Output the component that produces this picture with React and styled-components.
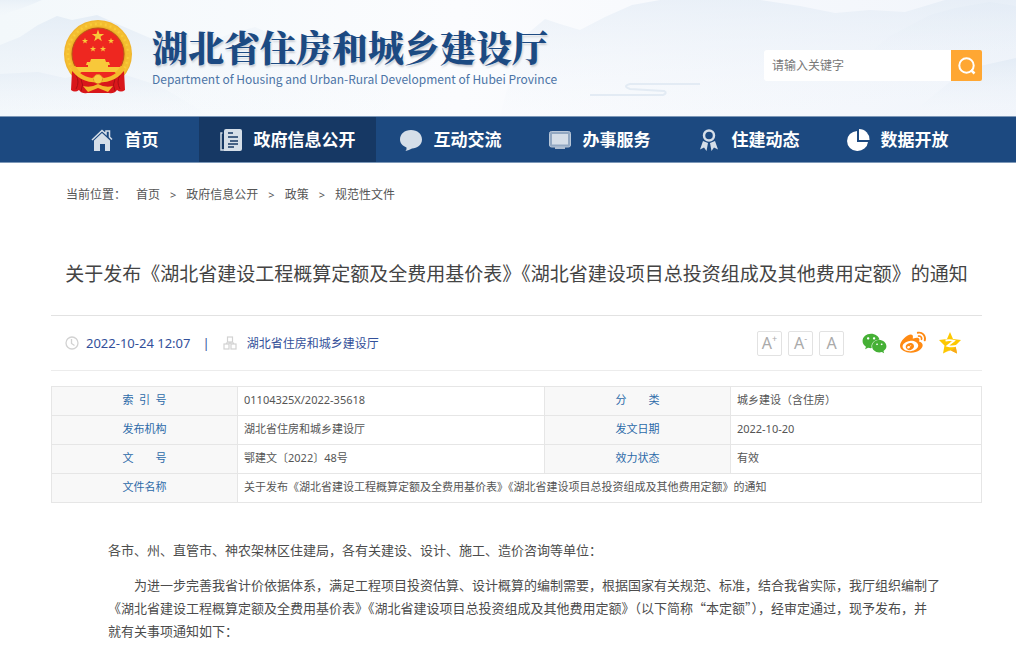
import React, { useState } from "react";
import styled, { createGlobalStyle } from "styled-components";
import { FaWeixin, FaWeibo } from "react-icons/fa";

const GlobalStyle = createGlobalStyle`
  * {
    box-sizing: border-box;
  }
  body {
    margin: 0;
    background: #fff;
    color: #555;
    font-family: "Noto Sans", "Noto Sans CJK SC", sans-serif;
    font-size: 13px;
  }
  a {
    color: inherit;
    text-decoration: none;
  }
`;

const STAR = "0,-10 2.3,-3.2 9.5,-3.1 3.8,1.2 5.9,8.1 0,4 -5.9,8.1 -3.8,1.2 -9.5,-3.1 -2.3,-3.2";

const Emblem = () => (
  <svg width="70" height="74" viewBox="0 0 70 74" role="img" aria-label="国徽">
    <defs>
      <radialGradient id="gold" cx="50%" cy="50%" r="50%">
        <stop offset="76%" stopColor="#e9a51f" />
        <stop offset="88%" stopColor="#fbcf3a" />
        <stop offset="100%" stopColor="#eeb02a" />
      </radialGradient>
    </defs>
    <circle cx="35" cy="34" r="34" fill="url(#gold)" />
    <circle cx="35" cy="34" r="30" fill="none" stroke="#f3bd30" strokeWidth="3" strokeDasharray="3 2" />
    <circle cx="35" cy="34" r="26" fill="#ee2720" stroke="#b9541a" strokeWidth="1" />
    <path d="M9 51 Q20 62 35 62 Q50 62 61 51 L62 70 Q58 73 54 70 Q51 74 46 73 H24 Q19 74 16 70 Q12 73 8 70Z" fill="#d9171b" />
    <path d="M13 55 Q17 62 13 69 M18 59 Q21 65 18 71 M57 55 Q53 62 57 69 M52 59 Q49 65 52 71" fill="none" stroke="#a90f14" strokeWidth="1" />
    <g fill="#f8c83a">
      <polygon points={STAR} transform="translate(35 16) scale(.65)" />
      <polygon points={STAR} transform="translate(22 21) scale(.32)" />
      <polygon points={STAR} transform="translate(48 21) scale(.32)" />
      <polygon points={STAR} transform="translate(30 29) scale(.32)" />
      <polygon points={STAR} transform="translate(40 29) scale(.32)" />
      <path d="M28 39 h14 l1 3 h-16z M24 42 h22 l1 3 h-24z M25 45 h20 v3 h-20z" />
      <path d="M11 47 H59 L56 52 H14Z" />
    </g>
    <path d="M10 47 Q17 60 35 60 Q53 60 60 47" fill="none" stroke="#f4bb2c" strokeWidth="5" />
    <path d="M17 53 H53 Q48 57 41 58 L35 55 L29 58 Q22 57 17 53Z" fill="#ee2720" />
    <circle cx="35" cy="59" r="4.500" fill="#f9cb3f" stroke="#dd9a20" strokeWidth="1" strokeDasharray="2 1" />
    <path d="M20 66 Q28 68 35 64 Q42 68 50 66 L45 72 L35 68 L25 72Z" fill="#f4b82d" />
  </svg>
);

const Mountains = () => (
  <Scenery viewBox="0 0 1016 116" preserveAspectRatio="none" aria-hidden="true">
    <defs>
      <linearGradient id="fade" x1="0" y1="0" x2="0" y2="1">
        <stop offset="0" stopColor="#dfe9f4" />
        <stop offset="1" stopColor="#f5f8fc" stopOpacity="0.3" />
      </linearGradient>
      <linearGradient id="sky" x1="0" y1="0" x2="1" y2="0">
        <stop offset="0" stopColor="#f3f8fb" />
        <stop offset="0.45" stopColor="#fbfcfe" />
        <stop offset="1" stopColor="#f1f5fb" />
      </linearGradient>
    </defs>
    <rect width="1016" height="116" fill="url(#sky)" />
    <g fill="url(#fade)">
      <path d="M0 0 H42 Q24 8 10 12 L0 18Z" opacity="0.5" />
      <path d="M0 45 L20 37 L38 25 L57 16 L72 20 L97 15 L122 26 L150 38 L190 54 L190 116 H0Z" opacity="0.7" />
      <path d="M0 74 L38 72 L65 78 L110 70 L160 86 L210 116 H0Z" opacity="0.5" />
      <path d="M200 45 L230 34 L255 27 L280 38 L340 46 L390 50 V116 H160Z" opacity="0.25" />
      <path d="M520 40 L545 19 L560 24 L580 30 L605 17 L632 5 L660 0 H760 L800 6 L835 13 L870 10 L905 12 L945 0 H1016 V116 H500Z" opacity="0.55" />
      <path d="M875 48 L890 36 L930 15 L955 8 L990 2 L1016 6 V80 H880Z" opacity="0.4" />
      <path d="M925 102 L950 82 L980 66 L1016 58 V116 H910Z" opacity="0.7" />
    </g>
    <path d="M590 95 H663 Q668 93 664 91 L630 89 Q622 86 630 84 H700" fill="none" stroke="#e3ebf4" strokeWidth="2" />
  </Scenery>
);

const NAV_ICONS = {
  home: (
    <>
      <path d="M1 11 L11 1.500 L15 5 V2 H18.500 V8 L21 10.500" fill="none" stroke="currentColor" strokeWidth="1.500" />
      <path d="M11 4 L19 11.500 V22 H14 V15 H9 V22 H3 V11.500Z" />
    </>
  ),
  news: (
    <>
      <path d="M6 0 H20 Q22 0 22 2 V20 Q22 22 20 22 H4 V2 Q4 0 6 0Z" />
      <path d="M2.500 4 H1 V21 H4" fill="none" stroke="currentColor" strokeWidth="1.500" />
      <path d="M8 4 H13 M8 8 H18 M10 12 H18 M8 15 H18 M8 18 H14" stroke="#163864" strokeWidth="1.300" />
    </>
  ),
  chat: <path d="M11 1 C17.500 1 22 5 22 10.500 C22 16 17 19.500 12 19.500 Q9 21 5.500 22 Q7 20 6.500 18.500 C2.500 17 0 14 0 10.500 C0 5 4.500 1 11 1Z" />,
  screen: (
    <>
      <rect x="0.500" y="2.500" width="21" height="15.500" rx="2" fill="#92a8c2" stroke="#b9c7d8" />
      <rect x="3" y="5" width="16" height="10.500" />
      <path d="M6 18 H16 V20 H6Z" fill="#aebed1" />
    </>
  ),
  medal: (
    <>
      <circle cx="11" cy="6.500" r="5" fill="none" stroke="currentColor" strokeWidth="2.500" />
      <path d="M5 12 L10 14 L8.500 22 L6 18.500 L2 20.500Z M17 12 L12 14 L13.500 22 L16 18.500 L20 20.500Z" />
    </>
  ),
  pie: (
    <>
      <path d="M10 2 V13 H21 A10.500 10 0 1 1 10 2Z" fill="#fff" />
      <path d="M12 0 A10.500 10.500 0 0 1 22.500 11 H12Z" fill="#fff" />
    </>
  ),
};

const NAV = [
  { label: "首页", icon: "home" },
  { label: "政府信息公开", icon: "news", active: true },
  { label: "互动交流", icon: "chat" },
  { label: "办事服务", icon: "screen" },
  { label: "住建动态", icon: "medal" },
  { label: "数据开放", icon: "pie" },
];

const CRUMBS = ["首页", "政府信息公开", "政策", "规范性文件"];

const DOC_TITLE =
  "关于发布《湖北省建设工程概算定额及全费用基价表》《湖北省建设项目总投资组成及其他费用定额》的通知";

const App = () => {
  const [keyword, setKeyword] = useState("");

  return (
    <>
      <GlobalStyle />
      <Page>
        <Banner>
          <Mountains />
          <Brand href="#">
            <Emblem />
            <BrandText>
              <BrandName>湖北省住房和城乡建设厅</BrandName>
              <BrandSub lang="en">
                Department of Housing and Urban-Rural Development of Hubei Province
              </BrandSub>
            </BrandText>
          </Brand>
          <SearchForm role="search" onSubmit={(e) => e.preventDefault()}>
            <SearchInput
              aria-label="请输入关键字"
              placeholder="请输入关键字"
              value={keyword}
              onChange={(e) => setKeyword(e.target.value)}
            />
            <SearchButton type="submit" aria-label="搜索">
              <svg width="18" height="18" viewBox="0 0 18 18" fill="none" stroke="#fff" strokeWidth="2">
                <circle cx="8.500" cy="8.500" r="7.200" />
                <path d="M13 13 L16.500 16.500" strokeWidth="2.500" />
              </svg>
            </SearchButton>
          </SearchForm>
        </Banner>

        <Nav>
          {NAV.map((item) => (
            <NavLink key={item.label} href="#" $active={item.active}>
              <svg width="23" height="23" viewBox="0 0 23 23" fill="currentColor" aria-hidden="true">
                {NAV_ICONS[item.icon]}
              </svg>
              <NavLabel>{item.label}</NavLabel>
            </NavLink>
          ))}
        </Nav>

        <Content>
          <Breadcrumb>
            <CrumbLead>当前位置：</CrumbLead>
            {CRUMBS.map((crumb, i) => (
              <React.Fragment key={crumb}>
                {i > 0 && <CrumbArrow>&gt;</CrumbArrow>}
                <a href="#">{crumb}</a>
              </React.Fragment>
            ))}
          </Breadcrumb>

          <Title>{DOC_TITLE}</Title>

          <MetaBar>
            <MetaInfo>
              <svg width="14" height="14" viewBox="0 0 14 14" fill="none" stroke="#d2d2d2" strokeWidth="1.300">
                <circle cx="7" cy="7" r="6" />
                <path d="M6.500 3 V7.500 L9.500 9.500" />
              </svg>
              <time>2022-10-24 12:07</time>
              <Divider>|</Divider>
              <svg width="14" height="14" viewBox="0 0 14 14" fill="none" stroke="#d2d2d2" strokeWidth="1.200">
                <rect x="4.500" y="1" width="5" height="5" />
                <rect x="1" y="8" width="5" height="5" />
                <rect x="8" y="8" width="5" height="5" />
                <path d="M7 6 V8 M3.500 8 V7 H10.500 V8" />
              </svg>
              <Source>湖北省住房和城乡建设厅</Source>
            </MetaInfo>
            <Tools>
              <SizeButton type="button" aria-label="放大字体">A<sup>+</sup></SizeButton>
              <SizeButton type="button" aria-label="缩小字体">A<sup>-</sup></SizeButton>
              <SizeButton type="button" aria-label="默认字体">A</SizeButton>
              <Share>
                <ShareLink href="#" aria-label="微信" $color="#45b035">
                  <FaWeixin size={25} />
                </ShareLink>
                <ShareLink href="#" aria-label="微博" $color="#ff8a12">
                  <FaWeibo size={26} />
                </ShareLink>
                <ShareLink href="#" aria-label="QQ空间" $color="#fdc800">
                  <svg width="22" height="22" viewBox="0 0 22 22" fill="currentColor">
                    <path d="M11 0 L14 7 L22 8 L16.500 13.500 L18 21.500 L11 18 L4 21.500 L5.500 13.500 L0 8 L8 7Z" />
                    <path d="M6.500 8.500 Q11 7.500 15 8.800 L8.500 13.800 Q13 15 18.500 13.500" fill="none" stroke="#fff" strokeWidth="1.800" />
                    <path d="M16.800 15 L18 21.500 L11 18 L8 19.500 Q14 18.500 16.800 15Z" fill="#f9a91a" />
                  </svg>
                </ShareLink>
              </Share>
            </Tools>
          </MetaBar>

          <InfoTable>
            <colgroup>
              <col style={{ width: "20%" }} />
              <col style={{ width: "33%" }} />
              <col style={{ width: "20%" }} />
              <col />
            </colgroup>
            <tbody>
              <tr>
                <th scope="row"><Spread><i>索</i><i>引</i><i>号</i></Spread></th>
                <td>01104325X/2022-35618</td>
                <th scope="row"><Spread><i>分</i><i>类</i></Spread></th>
                <td>城乡建设（含住房）</td>
              </tr>
              <tr>
                <th scope="row">发布机构</th>
                <td>湖北省住房和城乡建设厅</td>
                <th scope="row">发文日期</th>
                <td>2022-10-20</td>
              </tr>
              <tr>
                <th scope="row"><Spread><i>文</i><i>号</i></Spread></th>
                <td>鄂建文〔2022〕48号</td>
                <th scope="row">效力状态</th>
                <td>有效</td>
              </tr>
              <tr>
                <th scope="row">文件名称</th>
                <td colSpan={3}>{DOC_TITLE}</td>
              </tr>
            </tbody>
          </InfoTable>

          <Article>
            <p>各市、州、直管市、神农架林区住建局，各有关建设、设计、施工、造价咨询等单位：</p>
            <Indented>
              为进一步完善我省计价依据体系，满足工程项目投资估算、设计概算的编制需要，根据国家有关规范、标准，结合我省实际，我厅组织编制了
              <br />
              《湖北省建设工程概算定额及全费用基价表》《湖北省建设项目总投资组成及其他费用定额》（以下简称“本定额”），经审定通过，现予发布，并
              <br />
              就有关事项通知如下：
            </Indented>
          </Article>
        </Content>
      </Page>
    </>
  );
};

export default App;

const Page = styled.div`
  margin-right: 18px;
`;

const Banner = styled.header`
  position: relative;
  display: flex;
  justify-content: space-between;
  height: 116px;
  padding: 20px 34px 0 63px;
`;

const Scenery = styled.svg`
  position: absolute;
  inset: 0;
  z-index: -1;
  width: 100%;
  height: 100%;
`;

const Brand = styled.a`
  display: flex;
  gap: 19px;
`;

const BrandText = styled.div`
  display: flex;
  flex-direction: column;
  padding-top: 6px;
  white-space: nowrap;
`;

const BrandName = styled.h1`
  margin: 0;
  color: #1c4a82;
  font-family: "Noto Serif CJK SC", "Noto Sans CJK SC", serif;
  font-size: 36px;
  font-weight: 900;
  line-height: 42px;
  text-shadow: 1px 2px 2px #c9ced6;
`;

const BrandSub = styled.span`
  color: #4c74a6;
  font-family: "Noto Sans CJK SC", sans-serif;
  font-size: 12px;
  line-height: 22px;
`;

const SearchForm = styled.form`
  display: flex;
  width: 218px;
  height: 31px;
  margin-top: 30px;
`;

const SearchInput = styled.input`
  flex: 1;
  min-width: 0;
  padding: 0 8px;
  border: none;
  border-radius: 3px 0 0 3px;
  background: #fff;
  font-family: inherit;
  font-size: 12px;

  &::placeholder {
    color: #777;
  }
`;

const SearchButton = styled.button`
  display: flex;
  align-items: center;
  justify-content: center;
  width: 31px;
  padding: 0;
  border: none;
  border-radius: 0 2px 2px 0;
  background: #ffa733;
  cursor: pointer;
`;

const Nav = styled.nav`
  display: grid;
  grid-template-columns: 149fr 177fr repeat(4, 149fr);
  height: 47px;
  padding: 0 44px 0 50px;
  border-top: 1px solid #7d98b8;
  border-bottom: 1px solid #7d98b8;
  background: #1c4980;
`;

const NavLink = styled.a`
  display: flex;
  align-items: center;
  justify-content: center;
  gap: 11px;
  padding-top: 2px;
  background: ${({ $active }) => ($active ? "#163864" : "transparent")};
  color: #d5dee8;
`;

const NavLabel = styled.span`
  padding-bottom: 4px;
  color: #fff;
  font-size: 17px;
  font-weight: 700;
  white-space: nowrap;
`;

const Content = styled.main`
  padding: 0 34px 20px 51px;
`;

const Breadcrumb = styled.nav`
  display: flex;
  align-items: center;
  gap: 10px;
  height: 62px;
  padding-left: 15px;
  font-size: 12px;
`;

const CrumbLead = styled.span`
  width: 60px;
`;

const CrumbArrow = styled.span`
  font-size: 11px;
`;

const Title = styled.h2`
  margin: 0;
  padding: 35px 0 27px;
  border-bottom: 1px solid #e2e2e2;
  color: #444;
  font-size: 19px;
  font-weight: 400;
  line-height: 28px;
  text-align: center;
`;

const MetaBar = styled.div`
  display: flex;
  align-items: center;
  justify-content: space-between;
  height: 55px;
  margin-bottom: 15px;
  padding: 0 21px 0 14px;
  border-bottom: 1px solid #ececec;
`;

const MetaInfo = styled.div`
  display: flex;
  align-items: center;
  gap: 7px;
  color: #33509a;
`;

const Divider = styled.span`
  margin: 0 6px 0 5px;
`;

const Source = styled.span`
  margin-left: 3px;
  font-size: 12px;
`;

const Tools = styled.div`
  display: flex;
  align-items: center;
  gap: 6px;
`;

const SizeButton = styled.button`
  display: flex;
  justify-content: center;
  width: 25px;
  height: 25px;
  padding: 0;
  border: 1px solid #e2e2e2;
  border-radius: 2px;
  background: #fff;
  color: #aaa;
  font-family: "Noto Sans", sans-serif;
  font-size: 16px;
  line-height: 22px;
  cursor: pointer;

  sup {
    font-size: 9px;
    line-height: 14px;
  }
`;

const Share = styled.div`
  display: flex;
  align-items: center;
  gap: 13px;
  margin-left: 12px;
`;

const ShareLink = styled.a`
  display: flex;
  color: ${({ $color }) => $color};
`;

const InfoTable = styled.table`
  width: 100%;
  border-collapse: collapse;
  table-layout: fixed;
  font-size: 11px;
  line-height: 16px;

  th,
  td {
    height: 29px;
    padding: 0 6px 2px;
    border: 1px solid #e6e6e6;
    text-align: left;
  }
  th {
    background: #f8f8f8;
    color: #2c6aa8;
    font-weight: 400;
    text-align: center;
  }
`;

const Spread = styled.span`
  display: flex;
  justify-content: space-between;
  width: 44px;
  margin: 0 auto;

  i {
    font-style: normal;
  }
`;

const Article = styled.article`
  padding: 35px 40px 0 57px;
  color: #4c4c4c;
  font-family: "Noto Sans CJK SC", sans-serif;
  font-size: 13px;
  line-height: 23px;
  white-space: nowrap;

  p {
    margin: 0 0 12px;
  }
`;

const Indented = styled.p`
  text-indent: 2em;
`;
